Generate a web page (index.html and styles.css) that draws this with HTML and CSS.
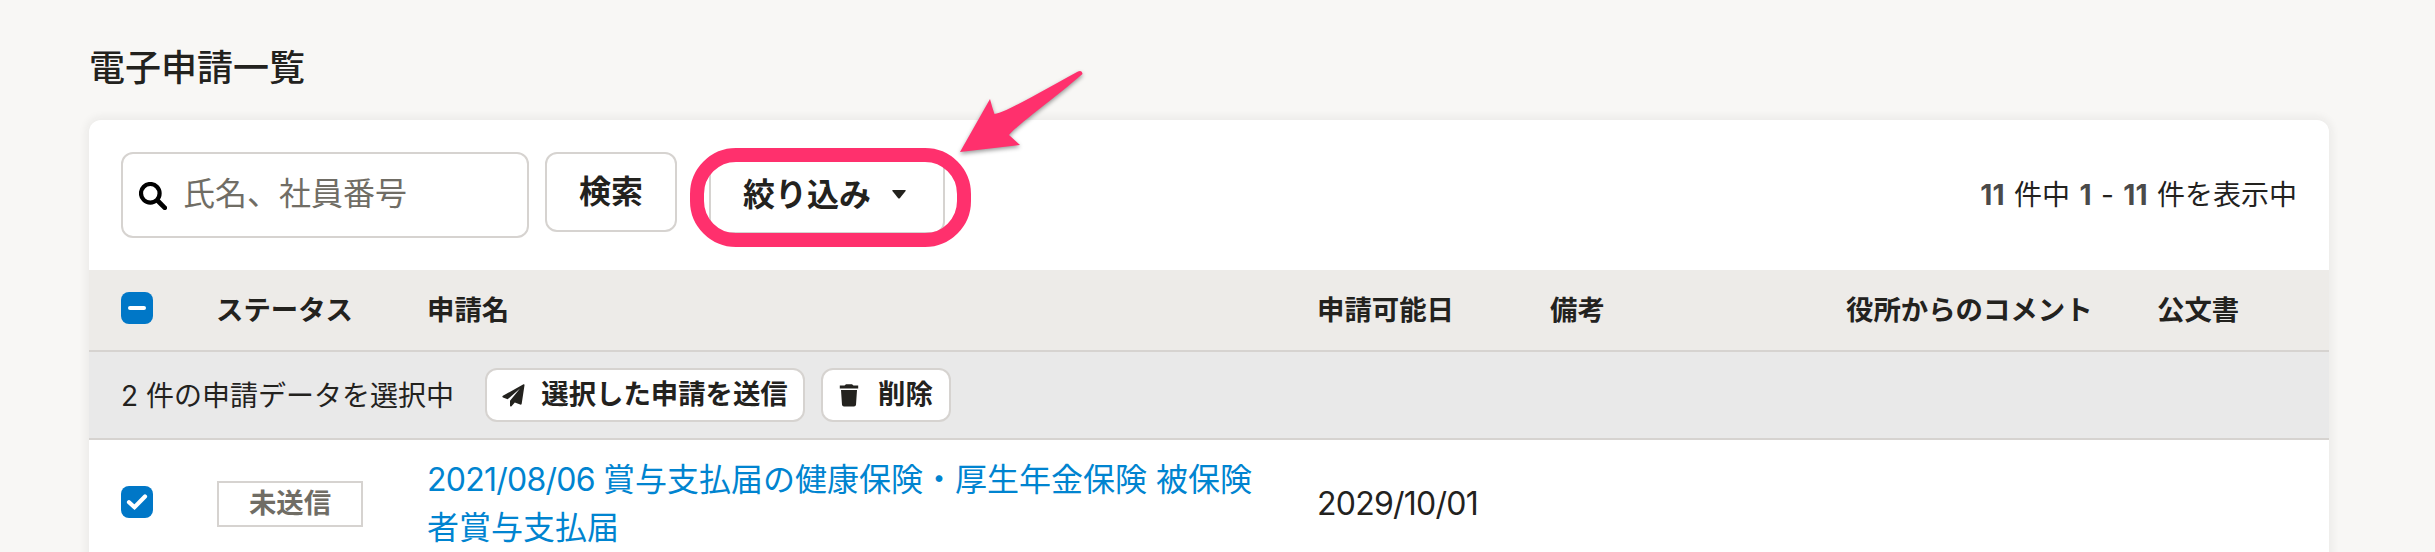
FILE: index.html
```html
<!DOCTYPE html>
<html lang="ja">
<head>
<meta charset="utf-8">
<title>電子申請一覧</title>
<link rel="stylesheet" href="styles.css">
</head>
<body>
<main class="page">
  <h1 class="title">電子申請一覧</h1>
  <section class="card">
    <div class="toolbar">
      <div class="search">
        <svg class="search-icon" width="28" height="28" viewBox="0 0 28 28"><circle cx="11.3" cy="11.3" r="9.3" fill="none" stroke="#000" stroke-width="4.2"/><path d="M19 19l6.800 6.800" stroke="#000" stroke-width="4.600" stroke-linecap="round"/></svg>
        <span class="placeholder">氏名、社員番号</span>
      </div>
      <button class="btn btn-search">検索</button>
      <div class="filter-wrap">
        <button class="btn btn-filter"><span>絞り込み</span><svg width="14" height="9" viewBox="0 0 14 9"><path d="M1 0h12q1.400 0 .6 1L8 8q-1 1-2 0L.4 1Q-.4 0 1 0z" fill="#23221e"/></svg></button>
        <div class="ring"></div>
        <svg class="arrow" width="140" height="100" viewBox="950 62 140 100"><path d="M960 152L990 99Q992 107 994.500 114C1005 113 1040 92 1078 71.500Q1082 70 1082.500 74C1055 98 1017 125 1009 135L1020 145Z" fill="#ff306d"/></svg>
      </div>
      <p class="count"><b>11</b> 件中 <b>1</b> - <b>11</b> 件を表示中</p>
    </div>
    <div class="row head">
      <span class="check"><svg width="32" height="32" viewBox="0 0 32 32"><path d="M9 16h14" stroke="#fff" stroke-width="4" stroke-linecap="round"/></svg></span>
      <span class="th">ステータス</span><span class="th">申請名</span><span class="th">申請可能日</span><span class="th">備考</span><span class="th">役所からのコメント</span><span class="th">公文書</span>
    </div>
    <div class="bulk">
      <span class="bulk-text">2 件の申請データを選択中</span>
      <button class="btn btn-small btn-send"><svg width="23" height="23" viewBox="0 0 23 23"><path d="M21.500.3Q22.700 0 22.500 1.300L19.700 19.700Q19.400 21 18.200 20.600L12.800 18.400L9.500 22.300Q8 23 8 21.400V16.800L18 4.600L5.600 15.300L1 13.400Q-.3 12.600.9 11.800Z" fill="#23221e"/></svg><span>選択した申請を送信</span></button>
      <button class="btn btn-small btn-delete"><svg width="20" height="23" viewBox="0 0 20 23"><path d="M.8 1.600H5.500L7 .3H13L14.500 1.600H19.200V4.400H.8ZM2 6H18L17 20.800Q16.800 22.600 15 22.600H5Q3.200 22.600 3 20.800Z" fill="#23221e"/></svg><span>削除</span></button>
    </div>
    <div class="row item">
      <span class="check"><svg width="32" height="32" viewBox="0 0 32 32"><path d="M8 16.200L13.500 21.200L24 10.500" fill="none" stroke="#fff" stroke-width="4.200" stroke-linecap="round"/></svg></span>
      <span class="status">未送信</span>
      <a class="link"><span class="num">2021/08/06 </span>賞与支払届の健康保険・厚生年金保険 被保険者賞与支払届</a>
      <span class="date num">2029/10/01</span>
    </div>
  </section>
</main>
</body>
</html>
```
FILE: styles.css
```css
* { box-sizing: border-box; }
body {
  margin: 0;
  background: #f8f7f5;
  color: #23221e;
  font-family: Inter, "Noto Sans CJK JP", sans-serif;
}
.page { height: 552px; overflow: hidden; padding: 44px 106px 0 89px; }
.title { margin: 0 0 28px; font-size: 36px; line-height: 48px; font-weight: 500; }
.card {
  width: 2240px;
  height: 600px;
  background: #fff;
  border-radius: 12px;
  box-shadow: 0 0 8px 3px rgba(35, 34, 30, .06);
}
.toolbar { display: flex; align-items: flex-start; height: 150px; padding: 32px 32px 0; }
.search {
  display: flex;
  align-items: center;
  width: 408px;
  height: 86px;
  padding-left: 16px;
  border: 2px solid #d6d3d0;
  border-radius: 12px;
}
.search-icon { margin-top: 2px; }
.placeholder { margin: 0 0 3px 16px; font-size: 32px; line-height: 40px; color: #706d65; }
.btn {
  display: flex;
  align-items: center;
  justify-content: center;
  padding: 0;
  background: #fff;
  color: #23221e;
  border: 2px solid #d6d3d0;
  border-radius: 12px;
  font-family: inherit;
  font-size: 32px;
  font-weight: 700;
  line-height: 40px;
}
.btn-search { width: 132px; height: 80px; margin-left: 16px; padding-bottom: 1px; }
.filter-wrap { position: relative; margin-left: 32px; }
.btn-filter { width: 236px; height: 82px; gap: 21px; padding: 3px 5px 0 0; }
.ring {
  position: absolute;
  left: -19px;
  top: -4px;
  width: 281px;
  height: 99px;
  border: 14px solid #ff306d;
  border-radius: 46px;
}
.arrow { position: absolute; left: 241px; top: -90px; filter: drop-shadow(0 2px 2px rgba(0, 0, 0, .4)); }
.count { margin: 21px 0 0 auto; font-size: 28px; line-height: 44px; word-spacing: 1.6px; }
.count b { color: #4a4a4a; }
.row {
  display: grid;
  grid-template-columns: 95px 211px 890px 233px 296px 311px 1fr;
  align-items: center;
  padding-left: 32px;
}
.head {
  height: 82px;
  background: #edebe8;
  border-bottom: 2px solid #d6d3d0;
  font-size: 27.400px;
  font-weight: 700;
}
.th { padding-bottom: 5px; }
.check { width: 32px; height: 32px; border-radius: 8px; background: #0077c7; margin-bottom: 4px; }
.check svg { display: block; }
.bulk {
  display: flex;
  align-items: center;
  height: 88px;
  padding-left: 32px;
  background: #e9e9e9;
  border-bottom: 2px solid #d6d3d0;
}
.bulk-text { width: 364px; padding-bottom: 3px; font-size: 28px; white-space: nowrap; }
.btn-small { height: 54px; font-size: 27.400px; }
.btn-small span { padding-bottom: 3px; }
.btn-send { width: 320px; gap: 16px; }
.btn-delete { width: 130px; margin-left: 16px; gap: 19px; }
.item { height: 128px; font-size: 32px; line-height: 48px; }
.status {
  width: 146px;
  height: 46px;
  margin-left: 1px;
  border: 2px solid #d6d3d0;
  color: #706d65;
  font-size: 27.400px;
  font-weight: 700;
  line-height: 40px;
  text-align: center;
}
.link { width: 840px; color: #0084d0; word-break: break-all; }
.num { letter-spacing: -.75px; }
.date { margin-bottom: 1px; }
```
